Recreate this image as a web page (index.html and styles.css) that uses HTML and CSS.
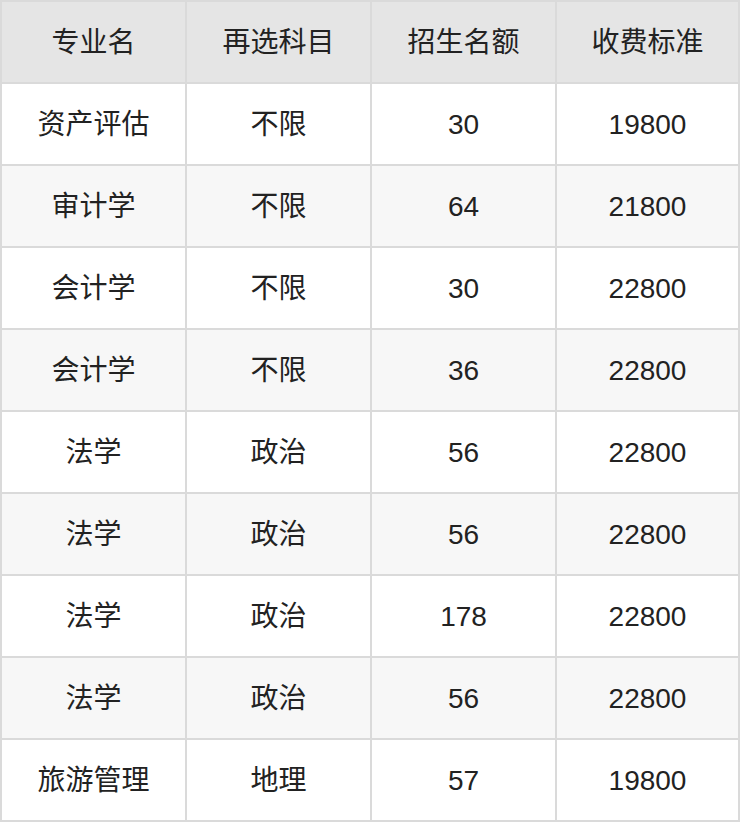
FILE: index.html
```html
<!DOCTYPE html>
<html lang="zh-CN">
<head>
<meta charset="utf-8">
<link rel="stylesheet" href="styles.css">
</head>
<body>
<table class="grid">
  <colgroup>
    <col class="c1"><col class="c2"><col class="c3"><col class="c4">
  </colgroup>
  <thead>
    <tr><th>专业名</th><th>再选科目</th><th>招生名额</th><th>收费标准</th></tr>
  </thead>
  <tbody>
    <tr><td>资产评估</td><td>不限</td><td>30</td><td>19800</td></tr>
    <tr><td>审计学</td><td>不限</td><td>64</td><td>21800</td></tr>
    <tr><td>会计学</td><td>不限</td><td>30</td><td>22800</td></tr>
    <tr><td>会计学</td><td>不限</td><td>36</td><td>22800</td></tr>
    <tr><td>法学</td><td>政治</td><td>56</td><td>22800</td></tr>
    <tr><td>法学</td><td>政治</td><td>56</td><td>22800</td></tr>
    <tr><td>法学</td><td>政治</td><td>178</td><td>22800</td></tr>
    <tr><td>法学</td><td>政治</td><td>56</td><td>22800</td></tr>
    <tr><td>旅游管理</td><td>地理</td><td>57</td><td>19800</td></tr>
  </tbody>
</table>
</body>
</html>
```
FILE: styles.css
```css
html, body {
  margin: 0;
  padding: 0;
  background: #ffffff;
}
.grid {
  width: 740px;
  table-layout: fixed;
  border-collapse: separate;
  border-spacing: 2px;
  background: #dadada;
  font-family: "Liberation Sans", "Noto Sans CJK SC", sans-serif;
  font-size: 28px;
  line-height: 1;
  color: #222222;
}
.c1, .c2, .c3 { width: 183px; }
.c4 { width: 181px; }
.grid th, .grid td {
  height: 80px;
  padding: 2px 0 0 0;
  box-sizing: border-box;
  text-align: center;
  vertical-align: middle;
  font-weight: normal;
  background: #ffffff;
}
.grid th {
  background: #e5e5e5;
}
.grid tbody tr:nth-child(even) td {
  background: #f7f7f7;
}
```
